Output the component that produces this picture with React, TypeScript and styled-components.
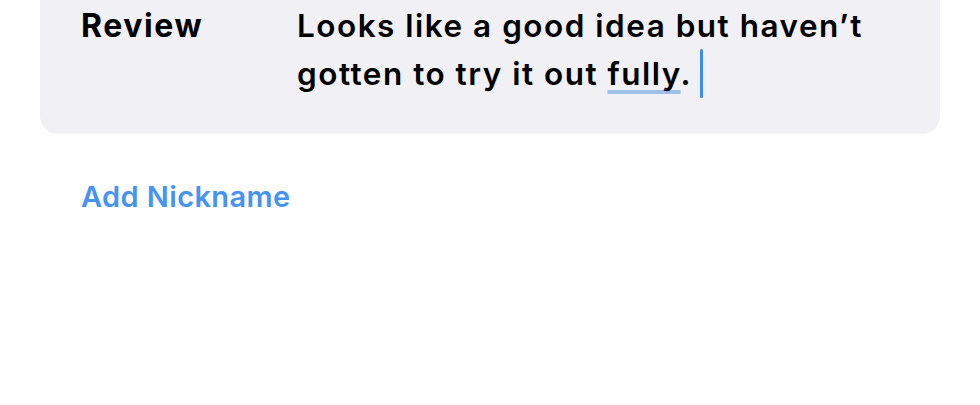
import React from "react";
import styled, { createGlobalStyle } from "styled-components";

const Global = createGlobalStyle`
  html, body { margin: 0; padding: 0; background: #ffffff; }
  body { font-family: Inter, "Noto Sans", sans-serif; -webkit-font-smoothing: antialiased; }
`;

const Page = styled.div`
  width: 980px;
  height: 405px;
  overflow: hidden;
  background: #ffffff;
`;

const Card = styled.div`
  margin: 0 40px;
  padding: 2px 41px 36px;
  background: #f1f0f5;
  border-radius: 0 0 18px 18px;
  display: grid;
  grid-template-columns: 216px 1fr;
`;

const Label = styled.div`
  font-size: 32px;
  font-weight: 700;
  line-height: 47px;
  color: #000;
  letter-spacing: 1.6px;
`;

const Value = styled.div`
  font-size: 31.5px;
  font-weight: 600;
  line-height: 47px;
  color: #000;
  letter-spacing: 1.5px;
`;

const Marked = styled.span`
  text-decoration: underline;
  text-decoration-color: #9cc0e8;
  text-decoration-thickness: 4px;
  text-underline-offset: 5px;
  text-decoration-skip-ink: none;
`;

const Caret = styled.span`
  display: inline-block;
  width: 3px;
  height: 49px;
  margin-left: 8px;
  vertical-align: -13px;
  background: #3b8cf5;
  border-radius: 2px;
`;

const Action = styled.button`
  display: block;
  margin: 45px 0 0 81px;
  padding: 0;
  border: none;
  background: none;
  font-family: Inter, "Noto Sans", sans-serif;
  font-size: 29px;
  font-weight: 600;
  color: #4593f2;
  letter-spacing: 0.4px;
  cursor: pointer;
`;

export default function App() {
  return (
    <Page>
      <Global />
      <Card>
        <Label>Review</Label>
        <Value>
          Looks like a good idea but haven’t
          <br />
          gotten to try it out <Marked>fully</Marked>.
          <Caret />
        </Value>
      </Card>
      <Action>Add Nickname</Action>
    </Page>
  );
}
